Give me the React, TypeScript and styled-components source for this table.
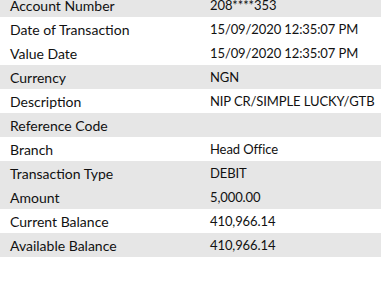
import React from 'react';
import styled, { createGlobalStyle } from 'styled-components';

const GlobalStyle = createGlobalStyle`
  html, body {
    margin: 0;
    padding: 0;
    background: #ffffff;
  }
  body {
    font-family: Lato, 'Open Sans', sans-serif;
    color: #111111;
  }
`;

type Detail = { label: string; value: string; shaded: boolean };

const details: Detail[] = [
  { label: 'Account Number', value: '208****353', shaded: true },
  { label: 'Date of Transaction', value: '15/09/2020 12:35:07 PM', shaded: false },
  { label: 'Value Date', value: '15/09/2020 12:35:07 PM', shaded: false },
  { label: 'Currency', value: 'NGN', shaded: true },
  { label: 'Description', value: 'NIP CR/SIMPLE LUCKY/GTB', shaded: false },
  { label: 'Reference Code', value: '', shaded: true },
  { label: 'Branch', value: 'Head Office', shaded: false },
  { label: 'Transaction Type', value: 'DEBIT', shaded: true },
  { label: 'Amount', value: '5,000.00', shaded: true },
  { label: 'Current Balance', value: '410,966.14', shaded: false },
  { label: 'Available Balance', value: '410,966.14', shaded: true },
];

export default function App() {
  return (
    <>
      <GlobalStyle />
      <Viewport>
        <DetailList>
          {details.map((d) => (
            <Row key={d.label} $shaded={d.shaded}>
              <Label>{d.label}</Label>
              <Value>{d.value}</Value>
            </Row>
          ))}
        </DetailList>
      </Viewport>
    </>
  );
}

const Viewport = styled.div`
  width: 381px;
  height: 297px;
  overflow: hidden;
  background: #ffffff;
`;

// the list is scrolled a little, so the first row is cut at the top
const DetailList = styled.div`
  display: flex;
  flex-direction: column;
  margin-top: -7px;
`;

const Row = styled.div<{ $shaded: boolean }>`
  display: grid;
  grid-template-columns: 200px 1fr;
  align-items: center;
  height: 24px;
  padding-left: 10px;
  background: ${(p) => (p.$shaded ? '#e6e6e6' : '#ffffff')};
`;

const Label = styled.span`
  white-space: nowrap;
  font-size: 14px;
`;

const Value = styled.span`
  white-space: nowrap;
  font-size: 13px;
  letter-spacing: -0.1px;
`;
